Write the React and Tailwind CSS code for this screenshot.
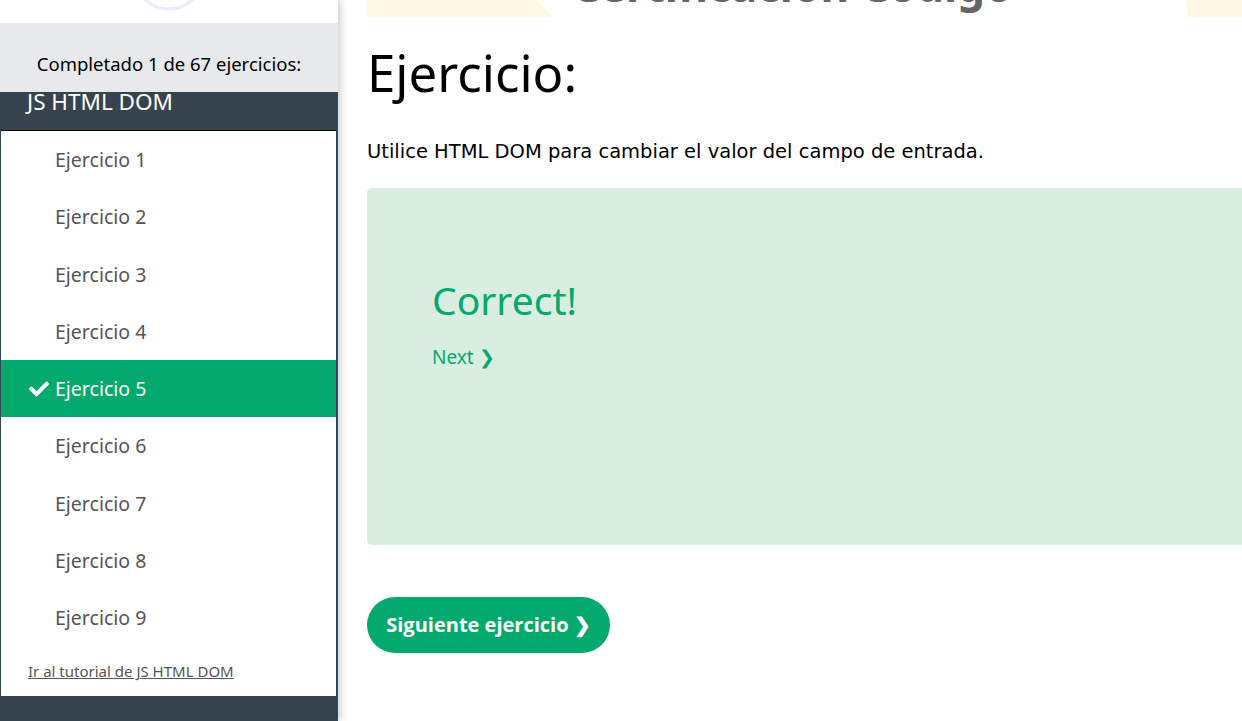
const items = [1, 2, 3, 4, 5, 6, 7, 8, 9]

function Check() {
  return (
    <svg viewBox="0 0 512 512" className="w-[20px] h-[20px] fill-white">
      <path d="M173.9 439.4l-166.4-166.4c-10-10-10-26.2 0-36.2l36.2-36.2c10-10 26.2-10 36.2 0L192 312.7 432.1 72.6c10-10 26.2-10 36.2 0l36.2 36.2c10 10 10 26.2 0 36.2l-294.4 294.4c-10 10-26.2 10-36.2 0z" />
    </svg>
  )
}

function Sidebar() {
  return (
    <div className="w-[338px] shrink-0 flex flex-col bg-[#38444d] shadow-[3px_0_7px_rgba(0,0,0,0.18)] z-10 font-['Noto_Sans',sans-serif]">
      <div className="h-[23px] bg-white overflow-hidden flex justify-center">
        <svg width="80" height="23" viewBox="0 0 80 23">
          <circle cx="40" cy="-26" r="35" fill="none" stroke="#efe9fc" strokeWidth="3" />
        </svg>
      </div>
      <div className="h-[69px] bg-[#e7e9eb] flex items-center justify-center pt-[12px] text-[18.5px] text-black">
        Completado 1 de 67 ejercicios:
      </div>
      <div className="h-[38px] px-[27px] text-white text-[22.5px] leading-[18px] pt-[1px]">JS HTML DOM</div>
      <div className="ml-[1px] mr-[2px] bg-white border-t border-black flex flex-col">
        {items.map((n) =>
          n === 5 ? (
            <div key={n} className="h-[57.25px] bg-[#04aa6d] text-white text-[19.5px] flex items-center gap-[6px] pl-[28px]">
              <Check />
              <span>Ejercicio {n}</span>
            </div>
          ) : (
            <div key={n} className="h-[57.25px] text-[#555] text-[19.5px] flex items-center pl-[54px]">
              Ejercicio {n}
            </div>
          )
        )}
        <div className="h-[50px] flex items-center pl-[27px]">
          <a className="text-[15px] text-[#555] underline">Ir al tutorial de JS HTML DOM</a>
        </div>
      </div>
      <div className="flex-1" />
    </div>
  )
}

export default function App() {
  return (
    <div className="h-[721px] w-[1242px] flex overflow-hidden bg-white">
      <Sidebar />
      <div className="flex-1 pl-[29px] overflow-hidden">
        <div className="h-[17px] flex overflow-hidden">
          <div className="w-[185px] shrink-0 bg-[#fff8e6] [clip-path:polygon(0_0,92%_0,100%_100%,0_100%)]" />
          <div className="w-[480px] shrink-0 text-[44px] leading-[10px] text-[#666] font-bold font-['Noto_Sans',sans-serif] text-center whitespace-nowrap overflow-hidden">
            <span className="relative -top-[20px]">Certificación Código</span>
          </div>
          <div className="w-[154px] shrink-0" />
          <div className="flex-1 bg-[#fff8e6] [clip-path:polygon(0_0,100%_0,100%_100%,4%_100%)]" />
        </div>
        <h1 className="mt-[25px] text-[51px] leading-[60px] text-black font-['Noto_Sans',sans-serif]">Ejercicio:</h1>
        <p className="mt-[37px] text-[19.5px] leading-[26px] text-black font-['DejaVu_Sans',sans-serif]">
          Utilice HTML DOM para cambiar el valor del campo de entrada.
        </p>
        <div className="mt-[23px] h-[357px] bg-[#d9eee1] rounded-l-[5px] pl-[65px] pt-[88px] font-['Noto_Sans',sans-serif]">
          <div className="text-[39px] leading-[48px] text-[#04aa6d]">Correct!</div>
          <div className="mt-[19px] text-[19px] text-[#04aa6d]">Next ❯</div>
        </div>
        <button className="mt-[52px] h-[56px] w-[243px] rounded-full bg-[#04aa6d] text-white text-[20px] font-bold font-['Open_Sans',sans-serif]">
          Siguiente ejercicio ❯
        </button>
      </div>
    </div>
  )
}
